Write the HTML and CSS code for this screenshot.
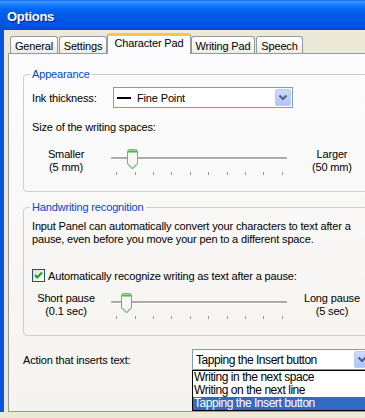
FILE: index.html
```html
<!DOCTYPE html>
<html>
<head>
<meta charset="utf-8">
<link rel="stylesheet" href="styles.css">
</head>
<body>
<div class="window">
  <div class="titlebar"><span class="title">Options</span></div>
  <div class="frame">
    <div class="client">
      <div class="tabs">
        <div class="tab t-general">General</div>
        <div class="tab t-settings">Settings</div>
        <div class="tab tab-active t-char">Character Pad</div>
        <div class="tab t-writing">Writing Pad</div>
        <div class="tab t-speech">Speech</div>
      </div>
      <div class="panel">
        <fieldset class="group g-appearance">
          <legend>Appearance</legend>
          <div class="ink-row">
            <span class="ink-label">Ink thickness:</span>
            <div class="combo combo-ink">
              <span class="ink-sample"></span>
              <span class="combo-text ink-text">Fine Point</span>
              <span class="combo-btn"><svg width="16" height="17" viewBox="0 0 16 17"><path d="M4.5 6.5 L8 10 L11.5 6.5" fill="none" stroke="#4D6185" stroke-width="2"/></svg></span>
            </div>
          </div>
          <div class="caption">Size of the writing spaces:</div>
          <div class="slider">
            <div class="slabel">Smaller<br>(5 mm)</div>
            <div class="strack">
              <div class="track-line"></div>
              <svg class="thumb thumb-size" width="11" height="21" viewBox="0 0 11 21"><path d="M0.5 2.5 Q0.5 0.5 2.5 0.5 H8.5 Q10.5 0.5 10.5 2.5 V15 L5.5 20 L0.5 15 Z" fill="#F6F6F3" stroke="#8C9BA8"/><path d="M1 1.5 H10 V3.5 H1 Z" fill="#39C439"/><path d="M1.5 15.3 L5.5 19.2 L9.5 15.3" fill="none" stroke="#4CBF4C" stroke-width="1"/></svg>
              <div class="ticks"><i></i><i></i><i></i><i></i><i></i><i></i><i></i><i></i><i></i><i></i></div>
            </div>
            <div class="slabel">Larger<br>(50 mm)</div>
          </div>
        </fieldset>
        <fieldset class="group g-hw">
          <legend>Handwriting recognition</legend>
          <p class="desc">Input Panel can automatically convert your characters to text after a<br>pause, even before you move your pen to a different space.</p>
          <div class="check-row"><span class="checkbox"><svg width="11" height="11" viewBox="0 0 11 11"><path d="M2 5 L4.3 7.5 L9 2.5" fill="none" stroke="#21A121" stroke-width="2.2"/></svg></span><span>Automatically recognize writing as text after a pause:</span></div>
          <div class="slider">
            <div class="slabel">Short pause<br>(0.1 sec)</div>
            <div class="strack">
              <div class="track-line"></div>
              <svg class="thumb thumb-pause" width="11" height="21" viewBox="0 0 11 21"><path d="M0.5 2.5 Q0.5 0.5 2.5 0.5 H8.5 Q10.5 0.5 10.5 2.5 V15 L5.5 20 L0.5 15 Z" fill="#F6F6F3" stroke="#8C9BA8"/><path d="M1 1.5 H10 V3.5 H1 Z" fill="#39C439"/><path d="M1.5 15.3 L5.5 19.2 L9.5 15.3" fill="none" stroke="#4CBF4C" stroke-width="1"/></svg>
              <div class="ticks"><i></i><i></i><i></i><i></i><i></i><i></i><i></i><i></i><i></i><i></i></div>
            </div>
            <div class="slabel">Long pause<br>(5 sec)</div>
          </div>
        </fieldset>
        <div class="action-row">
          <span class="action-label">Action that inserts text:</span>
          <div class="combo-wrap">
            <div class="combo combo-action">
              <span class="combo-text action-text">Tapping the Insert button</span>
              <span class="combo-btn"><svg width="16" height="17" viewBox="0 0 16 17"><path d="M4.5 6.5 L8 10 L11.5 6.5" fill="none" stroke="#4D6185" stroke-width="2"/></svg></span>
            </div>
            <ul class="droplist">
              <li>Writing in the next space</li>
              <li>Writing on the next line</li>
              <li class="sel">Tapping the Insert button</li>
            </ul>
          </div>
        </div>
      </div>
    </div>
  </div>
</div>
</body>
</html>
```

FILE: styles.css
```css
* { box-sizing: border-box; }
html, body {
  margin: 0;
  padding: 0;
  width: 365px;
  height: 418px;
  overflow: hidden;
  background: #ECE9D8;
}
body {
  font-family: "Liberation Sans", Arial, sans-serif;
  font-size: 11px;
  letter-spacing: -0.15px;
  color: #000;
}
.window {
  width: 392px;
}
.titlebar {
  height: 30px;
  display: flex;
  align-items: center;
  padding: 2px 0 0 7px;
  background: linear-gradient(180deg, #0A5FEF 0%, #3D95FF 5%, #2A8AFF 10%, #1479FB 18%, #0667F4 30%, #025DEB 45%, #0057E5 65%, #0055E3 85%, #0048D6 100%);
}
.title {
  color: #fff;
  font-weight: bold;
  font-size: 13px;
  letter-spacing: -0.3px;
  text-shadow: 1px 1px 0 #0A1F8A;
}
.frame {
  display: flex;
  border-left: 4px solid #0A55DE;
}
.client {
  flex: 1;
  padding: 3px 0 0 4px;
}
.tabs {
  display: flex;
  align-items: flex-end;
  height: 21px;
  margin-left: 2px;
  position: relative;
  z-index: 2;
}
.tab {
  height: 17px;
  margin: 0 1px 1px 0;
  padding-top: 3px;
  line-height: 13px;
  text-align: center;
  border: 1px solid #919B9C;
  border-bottom: none;
  border-radius: 3px 3px 0 0;
  background: linear-gradient(180deg, #FFFFFF 0%, #F7F7F4 50%, #ECEBE5 100%);
  white-space: nowrap;
}
.t-general { width: 48px; }
.t-settings { width: 48px; }
.t-char { width: 84px; }
.t-writing { width: 64px; }
.t-speech { width: 47px; }
.tab-active {
  height: 21px;
  margin: 0 0 0 -1px;
  padding-top: 1px;
  border-top: 3px solid #FFC83C;
  background: #FCFCFE;
}
.panel {
  position: relative;
  z-index: 1;
  margin-top: -1px;
  width: 372px;
  height: 359px;
  border: 1px solid #919B9C;
  background: linear-gradient(180deg, #FCFCFE 0%, #F4F3EE 100%);
  padding: 0 0 0 14px;
}
.group {
  margin: 13px 0 0 0;
  width: 352px;
  border: 1px solid #D0D0BF;
  border-radius: 4px;
  padding: 6px 8px 17px 8px;
  min-width: 0;
}
.group legend {
  color: #0046D5;
  line-height: 14px;
  padding: 0 2px;
  margin-left: -2px;
}
.g-hw { margin-top: 8px; }
.ink-row {
  display: flex;
  align-items: center;
  height: 21px;
}
.ink-label { width: 81px; }
.combo {
  width: 180px;
  height: 21px;
  border: 1px solid #7F9DB9;
  background: #fff;
  display: flex;
  align-items: center;
}
.ink-sample {
  width: 14px;
  height: 2px;
  background: #000;
  margin-left: 3px;
}
.ink-text { margin-left: 6px; }
.combo-btn {
  margin: 1px 1px 1px auto;
  width: 16px;
  height: 17px;
  border: 1px solid #B9CBF3;
  border-radius: 2px;
  background: linear-gradient(180deg, #CCDAFC 0%, #B9CDF9 60%, #AFC5F6 100%);
  display: flex;
}
.combo-btn svg { margin: -1px; }
.caption {
  margin-top: 12px;
  line-height: 14px;
}
.slider {
  display: flex;
  height: 26px;
  margin-top: 14px;
}
.g-hw .slider { margin-top: 10px; }
.slabel {
  width: 69px;
  text-align: center;
  line-height: 13px;
  white-space: nowrap;
}
.strack {
  position: relative;
  width: 178px;
  margin: 0 11px;
  padding-top: 9px;
}
.track-line {
  height: 2px;
  background: #ACACA4;
  border-radius: 1px;
  border-bottom: 1px solid #fff;
  box-sizing: content-box;
}
.thumb {
  position: absolute;
  top: 1px;
}
.thumb-size { left: 16px; }
.thumb-pause { left: 10px; }
.ticks {
  display: flex;
  justify-content: space-between;
  margin: 12px 4px 0 5px;
}
.ticks i {
  display: block;
  width: 1px;
  height: 3px;
  background: #9A9A94;
}
.desc {
  margin: 0;
  line-height: 13px;
  white-space: nowrap;
}
.check-row {
  display: flex;
  align-items: center;
  height: 13px;
  margin-top: 23px;
  white-space: nowrap;
}
.checkbox {
  width: 13px;
  height: 13px;
  border: 1px solid #1C5180;
  background: linear-gradient(135deg, #DCDCD7 0%, #F4F4F0 60%, #FFFFFF 100%);
  margin-right: 3px;
  display: flex;
  align-items: center;
  justify-content: center;
}
.action-row {
  display: flex;
  align-items: center;
  margin-top: 13px;
  height: 21px;
}
.action-label { width: 169px; }
.combo-wrap {
  position: relative;
}
.action-text {
  margin-left: 3px;
  white-space: nowrap;
  font-size: 12px;
  letter-spacing: -0.45px;
}
.droplist {
  position: absolute;
  top: 21px;
  left: 0;
  width: 180px;
  margin: 0;
  padding: 0;
  list-style: none;
  border: 1px solid #000;
  background: #fff;
  font-size: 12px;
  letter-spacing: -0.45px;
}
.droplist li {
  height: 13px;
  line-height: 13px;
  padding-left: 1px;
  white-space: nowrap;
}
.droplist li.sel {
  background: #316AC5;
  color: #fff;
}
```
